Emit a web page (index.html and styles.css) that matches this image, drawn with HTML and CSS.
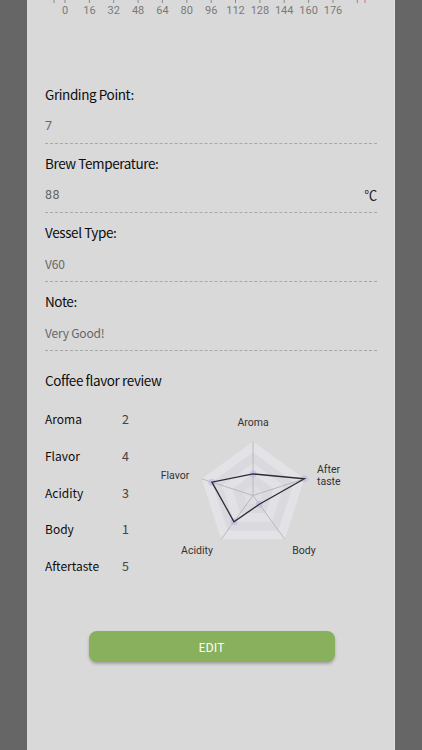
FILE: index.html
```html
<!DOCTYPE html>
<html>
<head>
    <title>Coffee Record</title>
    <link rel="stylesheet" href="styles.css">
</head>
<body>
    <div class="record-card">
        <svg class="axis-strip" width="368" height="20" viewBox="0 0 368 20">
            <g stroke="#8a8a8a" stroke-width="1">
                <line x1="27" y1="0" x2="27" y2="3"/>
                <line x1="38" y1="0" x2="38" y2="3"/>
                <line x1="62.4" y1="0" x2="62.4" y2="3"/>
                <line x1="86.7" y1="0" x2="86.7" y2="3"/>
                <line x1="111.1" y1="0" x2="111.1" y2="3"/>
                <line x1="135.4" y1="0" x2="135.4" y2="3"/>
                <line x1="159.8" y1="0" x2="159.8" y2="3"/>
                <line x1="184.2" y1="0" x2="184.2" y2="3"/>
                <line x1="208.5" y1="0" x2="208.5" y2="3"/>
                <line x1="232.9" y1="0" x2="232.9" y2="3"/>
                <line x1="257.2" y1="0" x2="257.2" y2="3"/>
                <line x1="281.6" y1="0" x2="281.6" y2="3"/>
                <line x1="306" y1="0" x2="306" y2="3"/>
                <line x1="330.3" y1="0" x2="330.3" y2="3"/>
            </g>
            <line x1="338" y1="0" x2="338" y2="3" stroke="#d07070" stroke-width="1"/>
            <g class="axis-label" text-anchor="middle">
                <text x="38" y="14">0</text>
                <text x="62.4" y="14">16</text>
                <text x="86.7" y="14">32</text>
                <text x="111.1" y="14">48</text>
                <text x="135.4" y="14">64</text>
                <text x="159.8" y="14">80</text>
                <text x="184.2" y="14">96</text>
                <text x="208.5" y="14">112</text>
                <text x="232.9" y="14">128</text>
                <text x="257.2" y="14">144</text>
                <text x="281.6" y="14">160</text>
                <text x="306" y="14">176</text>
            </g>
        </svg>

        <div class="fields">
            <div class="field">
                <div class="field-label">Grinding Point:</div>
                <div class="field-value"><span class="num">7</span></div>
            </div>
            <div class="field">
                <div class="field-label">Brew Temperature:</div>
                <div class="field-value"><span class="num">88</span><span class="unit">℃</span></div>
            </div>
            <div class="field">
                <div class="field-label">Vessel Type:</div>
                <div class="field-value">V60</div>
            </div>
            <div class="field">
                <div class="field-label">Note:</div>
                <div class="field-value">Very Good!</div>
            </div>
        </div>

        <div class="review">
            <div class="review-title">Coffee flavor review</div>
            <div class="review-body">
                <div class="score-list">
                    <div class="score-row"><span class="score-name">Aroma</span><span class="score-val">2</span></div>
                    <div class="score-row"><span class="score-name">Flavor</span><span class="score-val">4</span></div>
                    <div class="score-row"><span class="score-name">Acidity</span><span class="score-val">3</span></div>
                    <div class="score-row"><span class="score-name">Body</span><span class="score-val">1</span></div>
                    <div class="score-row"><span class="score-name">Aftertaste</span><span class="score-val">5</span></div>
                </div>
                <svg class="radar" width="220" height="184" viewBox="0 0 220 184">
                    <polygon points="108,40.5 159.36,77.81 139.74,138.19 76.26,138.19 56.64,77.81" fill="#e3e3e7"/>
                    <polygon points="108,51.3 149.09,81.15 133.39,129.45 82.61,129.45 66.91,81.15" fill="#d9d9de"/>
                    <polygon points="108,62.1 138.82,84.49 127.04,120.71 88.96,120.71 77.18,84.49" fill="#e1e1e6"/>
                    <polygon points="108,72.9 128.54,87.83 120.7,111.97 95.3,111.97 87.46,87.83" fill="#d9d9de"/>
                    <polygon points="108,83.7 118.27,91.16 114.35,103.24 101.65,103.24 97.73,91.16" fill="#dedee3"/>
                    <g stroke="#b0b0b4" stroke-width="0.8">
                        <line x1="108" y1="94.5" x2="108" y2="40.5"/>
                        <line x1="108" y1="94.5" x2="159.36" y2="77.81"/>
                        <line x1="108" y1="94.5" x2="139.74" y2="138.19"/>
                        <line x1="108" y1="94.5" x2="76.26" y2="138.19"/>
                        <line x1="108" y1="94.5" x2="56.64" y2="77.81"/>
                    </g>
                    <g fill="#b8b8e0" fill-opacity="0.6">
                        <circle cx="108" cy="72.9" r="3.5"/>
                        <circle cx="159.36" cy="77.81" r="3.5"/>
                        <circle cx="114.35" cy="103.24" r="3.5"/>
                        <circle cx="88.96" cy="120.71" r="3.5"/>
                        <circle cx="66.91" cy="81.15" r="3.5"/>
                    </g>
                    <polygon points="108,72.9 159.36,77.81 114.35,103.24 88.96,120.71 66.91,81.15" fill="none" stroke="#2a2a38" stroke-width="1.3" stroke-linejoin="miter"/>
                    <g class="radar-label">
                        <text x="108" y="25" text-anchor="middle">Aroma</text>
                        <text x="172" y="71.5">After</text>
                        <text x="172" y="83.5">taste</text>
                        <text x="30" y="78" text-anchor="middle">Flavor</text>
                        <text x="52" y="153" text-anchor="middle">Acidity</text>
                        <text x="159" y="153" text-anchor="middle">Body</text>
                    </g>
                </svg>
            </div>
        </div>

        <div class="actions">
            <button class="edit-btn">EDIT</button>
        </div>
    </div>
</body>
</html>
```

FILE: styles.css
```css
body {
    margin: 0;
    padding: 0;
    background-color: #666666;
    font-family: "Noto Sans CJK KR", "Noto Sans", Arial, sans-serif;
}

.record-card {
    width: 368px;
    height: 750px;
    margin-left: 27px;
    background-color: #d9d9d9;
    border-right: 1px solid #e2e2e2;
    box-sizing: border-box;
}

.axis-strip {
    display: block;
}

.axis-label text {
    font-family: Roboto, sans-serif;
    font-size: 11px;
    fill: #7a7a7a;
}

.fields {
    padding: 0 17px 0 18px;
    margin-top: 64px;
}

.field {
    border-bottom: 1px dashed #a8a8a8;
    padding-bottom: 7px;
    margin-bottom: 9px;
}

.field-label {
    font-size: 13.5px;
    line-height: 20px;
    letter-spacing: -0.4px;
    color: #0d0d0d;
}

.field-value {
    display: flex;
    justify-content: space-between;
    margin-top: 12px;
    font-size: 12px;
    line-height: 20px;
    letter-spacing: -0.2px;
    color: #666;
}

.field-value .num {
    font-family: Roboto, sans-serif;
    font-size: 12.5px;
    letter-spacing: 0.5px;
}

.field-value .unit {
    color: #222;
    font-size: 13px;
}

.review {
    padding: 10px 17px 0 18px;
}

.review-title {
    font-size: 13.5px;
    line-height: 20px;
    letter-spacing: -0.4px;
    color: #0d0d0d;
    margin-bottom: 11px;
}

.review-body {
    display: flex;
}

.score-list {
    width: 100px;
}

.score-row {
    display: flex;
    height: 36.75px;
    line-height: 36.75px;
    font-size: 12px;
    color: #0d0d0d;
}

.score-name {
    width: 77px;
}

.score-val {
    color: #444;
    font-size: 12.5px;
}

.radar {
    display: block;
}

.radar-label text {
    font-family: Roboto, sans-serif;
    font-size: 10.5px;
    fill: #333;
}

.actions {
    display: flex;
    justify-content: center;
    margin-top: 46px;
}

.edit-btn {
    width: 246px;
    height: 31px;
    margin-left: 2px;
    border: none;
    border-radius: 8px;
    background-color: #89b05c;
    color: #fff;
    font-family: "Noto Sans CJK KR", "Noto Sans", Arial, sans-serif;
    font-size: 12px;
    box-shadow: 0 2px 3px rgba(0, 0, 0, 0.25);
    cursor: pointer;
}
```
